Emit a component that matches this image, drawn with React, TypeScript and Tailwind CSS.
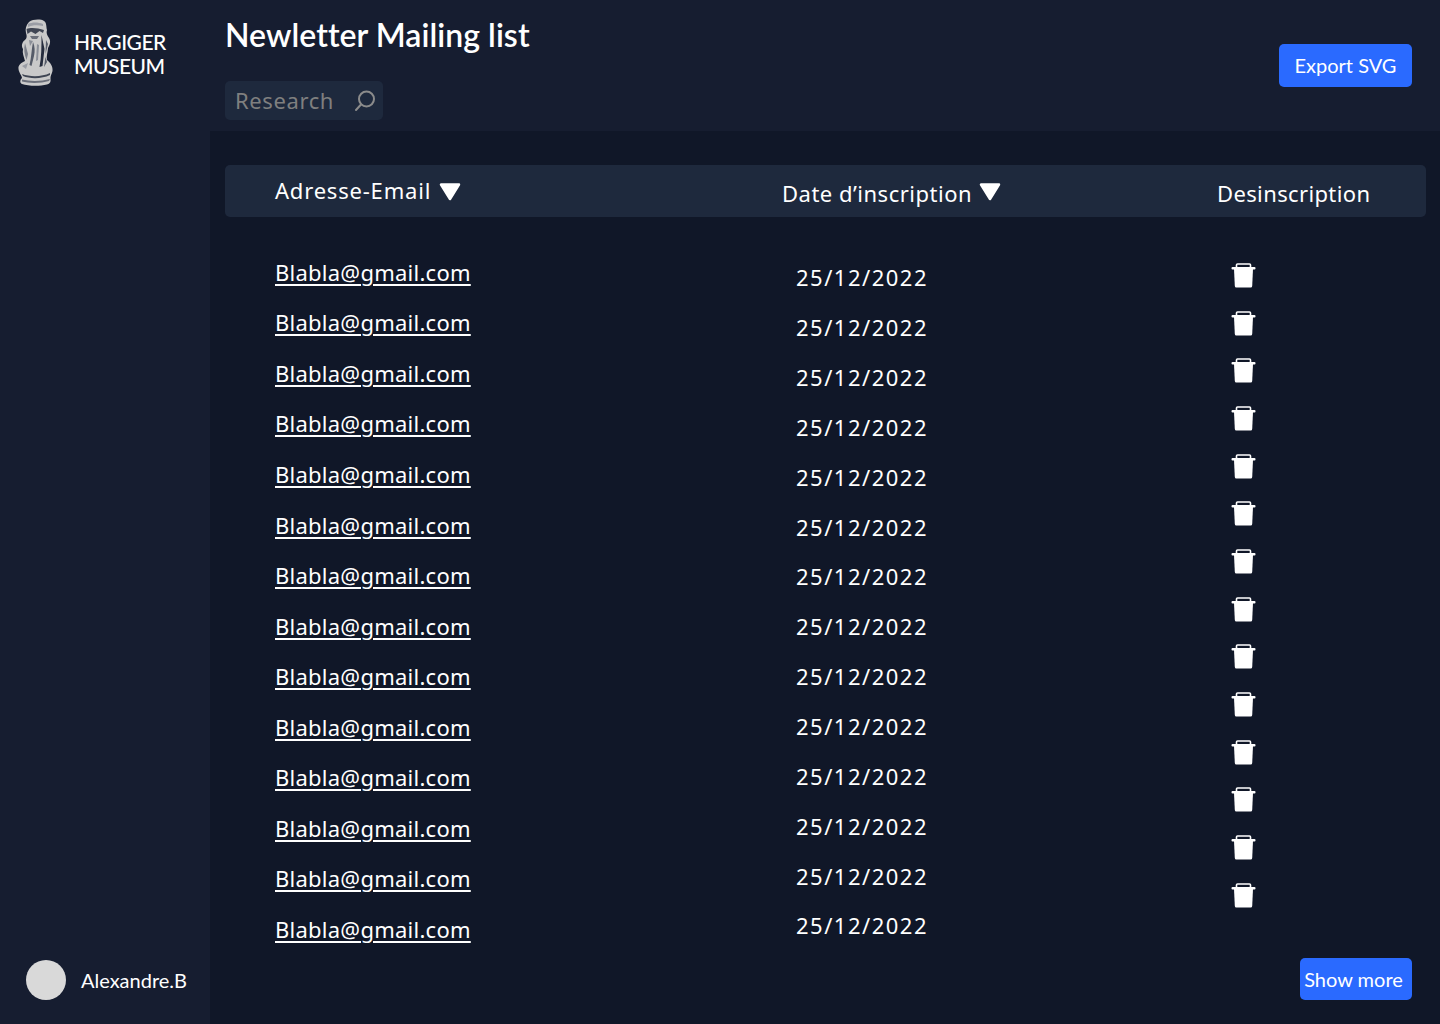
const rows = Array.from({ length: 14 }, (_, i) => i);

function Statue() {
  return (
    <svg width="38" height="68" viewBox="0 0 38 68" className="shrink-0">
      <path
        d="M12 3 C16 0 24 0 27 2 C30 4 29 8 30 11 C29 14 30 16 32 19 C34 22 33 26 31 29 C31 33 29 37 30 41 C34 44 36 48 35.5 52 C35 55 33 57 33.5 60 C34 63 33 64.5 30 65.5 C22 67.5 11 67 5 65 C2.5 63.5 3 61 5 59 C5 57 2 54 1.5 50 C1 46 4 44 8 42 C7 38 5 34 6 30 C4 27 5 23 8 21 C10 19 10 17 9 14 C8 10 9 6 12 3 Z"
        fill="#c9c9c9"
      />
      <path d="M11 5 C15 3 21 3 26 5 L26 7 C21 6 15 6 11 8 Z" fill="#9a9da5" />
      <path d="M9.5 10 C14 8 21 9 27 11 L26 14 L22.5 12 L18.5 15 L14 12.5 L10.5 15 Z" fill="#3f4553" />
      <path d="M13 17 L22 17 L20 20 L15 20 Z" fill="#6a6e79" />
      <path d="M12 21 L16 22 L13 27 Z" fill="#8a8e97" />
      <path d="M16 23 C18 28 18 32 17 37 L14.5 47 L12.5 46 C14.5 38 14.5 30 16 23 Z" fill="#555b68" />
      <path d="M24.5 16 L27.5 30 L25.5 47 L22.5 48 C24.5 38 24.5 27 24.5 16 Z" fill="#262d3e" />
      <path d="M20 25 L22 26 L21 41 L19 42 Z" fill="#8a8e97" />
      <path d="M8 24 L11 35 L9.5 41 C7.5 36 6.5 30 8 24 Z" fill="#7b7f89" />
      <path d="M29 21 L31 25 L28.5 35 Z" fill="#555b68" />
      <path d="M28.5 38 L30 43 L27 48 Z" fill="#555b68" />
      <path d="M5 47 L11 44 L9 50 Z" fill="#9a9da5" />
      <path d="M5 55 C13 58 25 58 33 54 L33 56 C25 60 13 60 6 57 Z" fill="#3f4553" />
      <path d="M5 60.5 C13 62.5 24 62.5 33 60 L32 62 C24 64.5 12 64.5 5 62.5 Z" fill="#6a6e79" />
    </svg>
  );
}

function Caret() {
  return (
    <svg width="22" height="18" viewBox="0 0 22 18" className="shrink-0">
      <path d="M2 1.5 H20 L11 16 Z" fill="#fff" stroke="#fff" strokeWidth="2.5" strokeLinejoin="round" />
    </svg>
  );
}

function SearchIcon() {
  return (
    <svg width="22" height="22" viewBox="0 0 22 22" fill="none" stroke="#8b8b8b" strokeWidth="2" strokeLinecap="round">
      <circle cx="12.5" cy="9" r="7.5" />
      <path d="M7 14.5 L2 20" />
    </svg>
  );
}

function TrashIcon() {
  return (
    <svg width="25" height="25" viewBox="0 0 25 25">
      <path d="M5.5 4.5 V2 Q5.5 1 6.5 1 H18.5 Q19.5 1 19.5 2 V4.5" fill="none" stroke="#fff" strokeWidth="1.6" />
      <rect x="0.5" y="4" width="24" height="2.4" rx="1" fill="#fff" />
      <path d="M3 6 H22 L21.2 23 Q21.1 24.5 19.7 24.5 H5.3 Q3.9 24.5 3.8 23 Z" fill="#fff" />
    </svg>
  );
}

export default function App() {
  return (
    <div className="flex h-[1024px] w-[1440px] overflow-hidden bg-[#101728] text-white font-['Noto_Sans',sans-serif]">
      <aside className="flex w-[210px] shrink-0 flex-col justify-between bg-[#161d30] font-['Lato',sans-serif]">
        <div className="flex items-center pl-[17px] pt-[19px]">
          <Statue />
          <div className="ml-[19px] pt-[2px] text-[21px] leading-[24px] font-medium tracking-[-0.5px]">
            HR.GIGER
            <br />
            MUSEUM
          </div>
        </div>
        <div className="flex items-center pb-[24px] pl-[26px]">
          <div className="h-10 w-10 rounded-full bg-[#d9d9d9]" />
          <span className="ml-[15px] text-[20px] leading-[24px]">Alexandre.B</span>
        </div>
      </aside>

      <main className="flex min-w-0 flex-1 flex-col">
        <header className="flex h-[131px] shrink-0 items-start justify-between bg-[#161d30] pl-[15px] pr-[28px]">
          <div>
            <h1 className="mt-[15px] font-['Lato',sans-serif] text-[32px] leading-[40px] font-semibold tracking-[0.05px]">
              Newletter Mailing list
            </h1>
            <div className="mt-[26px] flex h-[39px] w-[158px] items-center justify-between rounded-[5px] bg-[#1e293d] pl-[10px] pr-[7px]">
              <span className="text-[22px] tracking-[0.6px] text-[#7f7f7f]">Research</span>
              <SearchIcon />
            </div>
          </div>
          <button className="mt-[44px] h-[43px] w-[133px] rounded-[5px] bg-[#2a6aff] pb-[2px] font-['Lato',sans-serif] text-[20px]">
            Export SVG
          </button>
        </header>

        <section className="ml-[15px] mr-[14px] mt-[34px]">
          <div className="grid h-[52px] grid-cols-[557px_435px_1fr] items-center rounded-[5px] bg-[#1e293d] text-[22px]">
            <div className="flex items-center gap-[8px] pb-[1px] pl-[50px]">
              <span className="tracking-[0.8px]">Adresse-Email</span>
              <span className="pt-[3px]">
                <Caret />
              </span>
            </div>
            <div className="flex items-center gap-[7px] pt-[4px]">
              <span className="tracking-[0.5px]">Date d’inscription</span>
              <span className="mb-[2px]">
                <Caret />
              </span>
            </div>
            <span className="pt-[4px] tracking-[0.37px]">Desinscription</span>
          </div>

          <div className="grid grid-cols-[557px_435px_1fr] text-[22px]">
            <div className="pl-[50px] pt-[30px]">
              {rows.map((i) => (
                <div key={i} className="flex h-[50.55px] items-center">
                  <a href="#" className="underline decoration-[1.5px] underline-offset-[3px] tracking-[0.25px]">
                    Blabla@gmail.com
                  </a>
                </div>
              ))}
            </div>
            <div className="pl-[14px] pt-[36px]">
              {rows.map((i) => (
                <div key={i} className="flex h-[49.85px] items-center tracking-[1.5px]">
                  25/12/2022
                </div>
              ))}
            </div>
            <div className="pl-[14px] pt-[34px]">
              {rows.map((i) => (
                <div key={i} className="flex h-[47.7px] items-center pt-[1px]">
                  <TrashIcon />
                </div>
              ))}
            </div>
          </div>
        </section>

        <div className="mt-[3px] flex justify-end pr-[28px]">
          <button className="h-[42px] w-[112px] rounded-[5px] bg-[#2a6aff] pr-[5px] font-['Lato',sans-serif] text-[20px]">
            Show more
          </button>
        </div>
      </main>
    </div>
  );
}
